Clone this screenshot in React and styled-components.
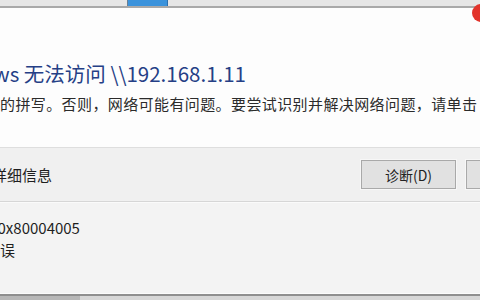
import React from 'react'
import styled, { createGlobalStyle } from "styled-components"

const Global = createGlobalStyle`
  html, body {
    margin: 0;
    padding: 0;
    background: #fdfdfd;
    overflow: hidden;
  }
  body {
    font-family: "Noto Sans CJK SC", "Noto Sans", sans-serif;
  }
`

const Screen = styled.div`
  width: 480px;
  height: 300px;
  overflow: hidden;
  display: flex;
  flex-direction: column;
  position: relative;
`

const TopBar = styled.div`
  height: 6px;
  flex-shrink: 0;
  background: #e6e6e6;
  border-bottom: 2px solid #a9a9a9;
  display: flex;
  align-items: stretch;
`

const TaskTab = styled.div`
  margin-left: 127px;
  width: 39px;
  background: #3b93dc;
  border-left: 1px solid #6b7f92;
  border-right: 1px solid #2c6fae;
`

const RedBadge = styled.div`
  position: absolute;
  top: 4px;
  left: 472px;
  width: 18px;
  height: 18px;
  border-radius: 50%;
  background: #e2332b;
`

const Main = styled.div`
  background: #fdfdfd;
  height: 139px;
  flex-shrink: 0;
  padding-top: 52px;
  box-sizing: border-box;
  white-space: nowrap;
`

const Title = styled.div`
  font-size: 20.5px;
  line-height: 26px;
  color: #253f86;
  margin-left: ${p => p.shift}px;
`

const Body = styled.div`
  margin-top: 8px;
  font-size: 15px;
  letter-spacing: 0.4px;
  line-height: 20px;
  color: #2b2b2b;
  margin-left: ${p => p.shift}px;
`

const Footer = styled.div`
  height: 53px;
  flex-shrink: 0;
  background: #f0f0f0;
  border-top: 1px solid #dedede;
  border-bottom: 1px solid #d6d6d6;
  display: flex;
  align-items: center;
  white-space: nowrap;
`

const Toggle = styled.div`
  font-size: 15px;
  color: #1e1e1e;
  margin-left: ${p => p.shift}px;
  flex: 1;
`

const Buttons = styled.div`
  display: flex;
  gap: 10px;
  margin-right: -81px;
`

const Button = styled.button`
  width: 95px;
  height: 29px;
  font-family: "Noto Sans CJK SC", "Noto Sans", sans-serif;
  font-size: 14px;
  color: #222;
  background: #e1e1e1;
  border: 1px solid #a9a9a9;
  box-shadow: 0 0 0 1px #f7f7f7;
  padding: 0;
`

const Details = styled.div`
  flex: 1;
  background: #f3f3f3;
  border-top: 1px solid #fafafa;
  padding-top: 14px;
  white-space: nowrap;
`

const DetailLine = styled.div`
  font-size: 15px;
  line-height: 22px;
  color: #1e1e1e;
  margin-left: ${p => p.shift}px;
`

const Frame = styled.div`
  height: 6px;
  flex-shrink: 0;
  border-top: 1px solid #fbfbfb;
  display: flex;
`

const FrameEdge = styled.div`
  width: ${p => p.w || 'auto'};
  flex: ${p => (p.w ? '0 0 auto' : 1)};
  border-top: 2px solid #8e8e8e;
  background: ${p => p.tone};
`

const App = () => {
  return (
    <Screen>
      <Global />
      <TopBar>
        <TaskTab />
      </TopBar>
      <RedBadge />
      <Main>
        <Title shift={-68}>Windows 无法访问 \\192.168.1.11</Title>
        <Body shift={-77}>请检查名称的拼写。否则，网络可能有问题。要尝试识别并解决网络问题，请单击“诊断”。</Body>
      </Main>
      <Footer>
        <Toggle shift={-8}>详细信息</Toggle>
        <Buttons>
          <Button>诊断(D)</Button>
          <Button>取消</Button>
        </Buttons>
      </Footer>
      <Details>
        <DetailLine shift={-70}>错误代码: 0x80004005</DetailLine>
        <DetailLine shift={-75}>未指定的错误</DetailLine>
      </Details>
      <Frame>
        <FrameEdge w="80px" tone="#b7b7b7" />
        <FrameEdge tone="#d6d6d6" />
      </Frame>
    </Screen>
  )
}

export default App
